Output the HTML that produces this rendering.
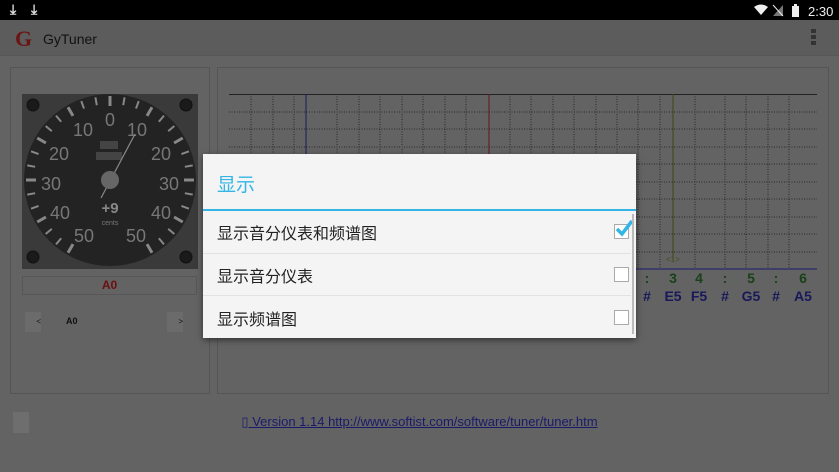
<!DOCTYPE html>
<html><head><meta charset="utf-8"><style>
*{margin:0;padding:0;box-sizing:border-box}
body{width:839px;height:472px;background:#636363;position:relative;overflow:hidden;font-family:"Liberation Sans","Noto Sans CJK SC",sans-serif}
.abs{position:absolute}
</style></head><body>
<div class="abs" style="left:0;top:0;width:839px;height:20px;background:#000"></div>
<div class="abs" style="left:10px;top:1px;color:#ddd;font-size:14px;font-weight:bold">⤓</div>
<div class="abs" style="left:31px;top:1px;color:#ddd;font-size:14px;font-weight:bold">⤓</div>
<svg class="abs" style="left:750px;top:3px" width="90" height="15">
<path d="M4 4 Q11 -1 18 4 L11 12Z" fill="#eee"/>
<path d="M33 2 V13 H23Z" fill="#777"/><path d="M23 2 L33 13" stroke="#eee" stroke-width="1"/>
<rect x="42" y="3" width="7" height="11" fill="#eee"/><rect x="44" y="1" width="3" height="2" fill="#eee"/>
<text x="58" y="13" fill="#eee" font-size="13" font-family="Liberation Sans">2:30</text></svg>
<div class="abs" style="left:0;top:20px;width:839px;height:36px;background:#5c5c5c;border-bottom:1px solid #575757"></div>
<div class="abs" style="left:15px;top:26px;color:#6a1414;font-family:'Liberation Serif',serif;font-size:22px;font-weight:bold">G</div>
<div class="abs" style="left:43px;top:31px;color:#111;font-size:14px">GyTuner</div>
<div class="abs" style="left:811px;top:29px;width:5px;height:18px;background:repeating-linear-gradient(#333 0 4px,transparent 4px 6px)"></div>

<div class="abs" style="left:10px;top:67px;width:200px;height:327px;border:1px solid #555"></div>
<div class="abs" style="left:217px;top:67px;width:612px;height:327px;border:1px solid #555"></div>

<svg class="abs" style="left:22px;top:94px" width="176" height="175">
<rect width="176" height="175" fill="#3a3a3a"/>
<circle cx="88" cy="86" r="86" fill="#232323"/>
<g stroke="#888">
<line x1="88" y1="2" x2="88" y2="12" transform="rotate(0 88 86)" stroke-width="3"/>
<line x1="88" y1="2" x2="88" y2="10" transform="rotate(10 88 86)" stroke-width="2"/>
<line x1="88" y1="2" x2="88" y2="10" transform="rotate(20 88 86)" stroke-width="2"/>
<line x1="88" y1="2" x2="88" y2="12" transform="rotate(30 88 86)" stroke-width="3"/>
<line x1="88" y1="2" x2="88" y2="10" transform="rotate(40 88 86)" stroke-width="2"/>
<line x1="88" y1="2" x2="88" y2="10" transform="rotate(50 88 86)" stroke-width="2"/>
<line x1="88" y1="2" x2="88" y2="12" transform="rotate(60 88 86)" stroke-width="3"/>
<line x1="88" y1="2" x2="88" y2="10" transform="rotate(70 88 86)" stroke-width="2"/>
<line x1="88" y1="2" x2="88" y2="10" transform="rotate(80 88 86)" stroke-width="2"/>
<line x1="88" y1="2" x2="88" y2="12" transform="rotate(90 88 86)" stroke-width="3"/>
<line x1="88" y1="2" x2="88" y2="10" transform="rotate(100 88 86)" stroke-width="2"/>
<line x1="88" y1="2" x2="88" y2="10" transform="rotate(110 88 86)" stroke-width="2"/>
<line x1="88" y1="2" x2="88" y2="12" transform="rotate(120 88 86)" stroke-width="3"/>
<line x1="88" y1="2" x2="88" y2="10" transform="rotate(130 88 86)" stroke-width="2"/>
<line x1="88" y1="2" x2="88" y2="10" transform="rotate(140 88 86)" stroke-width="2"/>
<line x1="88" y1="2" x2="88" y2="12" transform="rotate(150 88 86)" stroke-width="3"/>
<line x1="88" y1="2" x2="88" y2="10" transform="rotate(-10 88 86)" stroke-width="2"/>
<line x1="88" y1="2" x2="88" y2="10" transform="rotate(-20 88 86)" stroke-width="2"/>
<line x1="88" y1="2" x2="88" y2="12" transform="rotate(-30 88 86)" stroke-width="3"/>
<line x1="88" y1="2" x2="88" y2="10" transform="rotate(-40 88 86)" stroke-width="2"/>
<line x1="88" y1="2" x2="88" y2="10" transform="rotate(-50 88 86)" stroke-width="2"/>
<line x1="88" y1="2" x2="88" y2="12" transform="rotate(-60 88 86)" stroke-width="3"/>
<line x1="88" y1="2" x2="88" y2="10" transform="rotate(-70 88 86)" stroke-width="2"/>
<line x1="88" y1="2" x2="88" y2="10" transform="rotate(-80 88 86)" stroke-width="2"/>
<line x1="88" y1="2" x2="88" y2="12" transform="rotate(-90 88 86)" stroke-width="3"/>
<line x1="88" y1="2" x2="88" y2="10" transform="rotate(-100 88 86)" stroke-width="2"/>
<line x1="88" y1="2" x2="88" y2="10" transform="rotate(-110 88 86)" stroke-width="2"/>
<line x1="88" y1="2" x2="88" y2="12" transform="rotate(-120 88 86)" stroke-width="3"/>
<line x1="88" y1="2" x2="88" y2="10" transform="rotate(-130 88 86)" stroke-width="2"/>
<line x1="88" y1="2" x2="88" y2="10" transform="rotate(-140 88 86)" stroke-width="2"/>
<line x1="88" y1="2" x2="88" y2="12" transform="rotate(-150 88 86)" stroke-width="3"/>
</g>
<g fill="#777" font-family="Liberation Sans" font-size="18" text-anchor="middle">
<text x="88" y="32">0</text><text x="61" y="42">10</text><text x="115" y="42">10</text>
<text x="37" y="66">20</text><text x="139" y="66">20</text>
<text x="29" y="96">30</text><text x="147" y="96">30</text>
<text x="38" y="125">40</text><text x="139" y="125">40</text>
<text x="62" y="148">50</text><text x="114" y="148">50</text>
<text x="88" y="119" font-size="15" font-weight="bold" fill="#888">+9</text>
<text x="88" y="131" font-size="7">cents</text></g>
<rect x="78" y="47" width="18" height="8" fill="#444"/><rect x="74" y="58" width="26" height="8" fill="#444"/>
<line x1="79" y1="104" x2="113" y2="40" stroke="#888" stroke-width="1.2"/>
<circle cx="88" cy="86" r="9" fill="#666"/>
<g fill="#1a1a1a" stroke="#111"><circle cx="11" cy="11" r="6"/><circle cx="164" cy="11" r="6"/><circle cx="11" cy="163" r="6"/><circle cx="164" cy="163" r="6"/></g>
</svg>
<div class="abs" style="left:22px;top:276px;width:175px;height:19px;border:1px solid #575757;color:#6a1010;font-weight:bold;font-size:12px;text-align:center;line-height:17px">A0</div>
<div class="abs" style="left:25px;top:312px;width:16px;height:20px;background:#6b6b6b;font-size:8px;text-align:right;line-height:20px;color:#111">&lt;</div>
<div class="abs" style="left:167px;top:312px;width:16px;height:20px;background:#6b6b6b;font-size:8px;text-align:right;line-height:20px;color:#111">&gt;</div>
<div class="abs" style="left:66px;top:316px;font-size:9px;font-weight:bold;color:#111">A0</div>
<div class="abs" style="left:13px;top:412px;width:16px;height:21px;background:#6e6e6e"></div>

<svg class="abs" style="left:229px;top:94px" width="590" height="215">
<g stroke="#2a2a2a" stroke-width="1" stroke-dasharray="1 1.5">
<line x1="22" y1="0" x2="22" y2="175"/><line x1="44" y1="0" x2="44" y2="175"/><line x1="65" y1="0" x2="65" y2="175"/><line x1="108" y1="0" x2="108" y2="175"/><line x1="130" y1="0" x2="130" y2="175"/><line x1="151" y1="0" x2="151" y2="175"/><line x1="173" y1="0" x2="173" y2="175"/><line x1="194" y1="0" x2="194" y2="175"/><line x1="216" y1="0" x2="216" y2="175"/><line x1="237" y1="0" x2="237" y2="175"/><line x1="281" y1="0" x2="281" y2="175"/><line x1="302" y1="0" x2="302" y2="175"/><line x1="324" y1="0" x2="324" y2="175"/><line x1="345" y1="0" x2="345" y2="175"/><line x1="367" y1="0" x2="367" y2="175"/><line x1="388" y1="0" x2="388" y2="175"/><line x1="409" y1="0" x2="409" y2="175"/><line x1="431" y1="0" x2="431" y2="175"/><line x1="466" y1="0" x2="466" y2="175"/><line x1="496" y1="0" x2="496" y2="175"/><line x1="517" y1="0" x2="517" y2="175"/><line x1="539" y1="0" x2="539" y2="175"/><line x1="560" y1="0" x2="560" y2="175"/>
<line x1="0" y1="18" x2="588" y2="18"/><line x1="0" y1="35" x2="588" y2="35"/><line x1="0" y1="53" x2="588" y2="53"/><line x1="0" y1="70" x2="588" y2="70"/><line x1="0" y1="88" x2="588" y2="88"/><line x1="0" y1="105" x2="588" y2="105"/><line x1="0" y1="123" x2="588" y2="123"/><line x1="0" y1="140" x2="588" y2="140"/><line x1="0" y1="158" x2="588" y2="158"/>
</g>
<line x1="0" y1="0.5" x2="588" y2="0.5" stroke="#222"/>
<line x1="77" y1="0" x2="77" y2="175" stroke="#1a1a5a"/>
<line x1="260" y1="0" x2="260" y2="175" stroke="#5a1a1a"/>
<line x1="444" y1="0" x2="444" y2="166" stroke="#3e4a1a"/>
<line x1="0" y1="175" x2="588" y2="175" stroke="#1a1a6a"/>
<text x="444" y="168" fill="#4a4a1a" font-size="8" text-anchor="middle" font-family="Liberation Sans">&lt;1&gt;</text>
<g font-family="Liberation Sans" font-weight="bold" font-size="14" text-anchor="middle">
<g fill="#1a401a"><text x="418" y="189">:</text><text x="444" y="189">3</text><text x="470" y="189">4</text><text x="496" y="189">:</text><text x="522" y="189">5</text><text x="547" y="189">:</text><text x="574" y="189">6</text></g>
<g fill="#18185a"><text x="418" y="207">#</text><text x="444" y="207">E5</text><text x="470" y="207">F5</text><text x="496" y="207">#</text><text x="522" y="207">G5</text><text x="547" y="207">#</text><text x="574" y="207">A5</text></g></g>
</svg>

<div class="abs" style="left:0;top:414px;width:839px;text-align:center;font-size:13px;color:#1a1a6a;text-decoration:underline">▯ Version 1.14 http://www.softist.com/software/tuner/tuner.htm</div>

<div class="abs" style="left:203px;top:154px;width:433px;height:184px;background:#f4f4f4;box-shadow:0 2px 6px rgba(0,0,0,.5)">
<div class="abs" style="left:14px;top:16px;font-size:19px;color:#33b5e5">显示</div>
<div class="abs" style="left:0;top:55px;width:433px;height:2px;background:#33b5e5"></div>
<div class="abs" style="left:14px;top:66px;font-size:16px;color:#222">显示音分仪表和频谱图</div>
<div class="abs" style="left:0;top:99px;width:428px;height:1px;background:#e2e2e2"></div>
<div class="abs" style="left:14px;top:109px;font-size:16px;color:#222">显示音分仪表</div>
<div class="abs" style="left:0;top:141px;width:428px;height:1px;background:#e2e2e2"></div>
<div class="abs" style="left:14px;top:152px;font-size:16px;color:#222">显示频谱图</div>
<div class="abs" style="left:411px;top:70px;width:15px;height:15px;border:1px solid #aaa;background:#fff"></div>
<svg class="abs" style="left:412px;top:64px" width="20" height="20"><path d="M2 11 L7 16 L17 3" stroke="#33b5e5" stroke-width="3.5" fill="none"/></svg>
<div class="abs" style="left:411px;top:113px;width:15px;height:15px;border:1px solid #aaa;background:#fff"></div>
<div class="abs" style="left:411px;top:156px;width:15px;height:15px;border:1px solid #aaa;background:#fff"></div>
<div class="abs" style="left:429px;top:60px;width:2px;height:120px;background:#bbb"></div>
</div>
</body></html>
